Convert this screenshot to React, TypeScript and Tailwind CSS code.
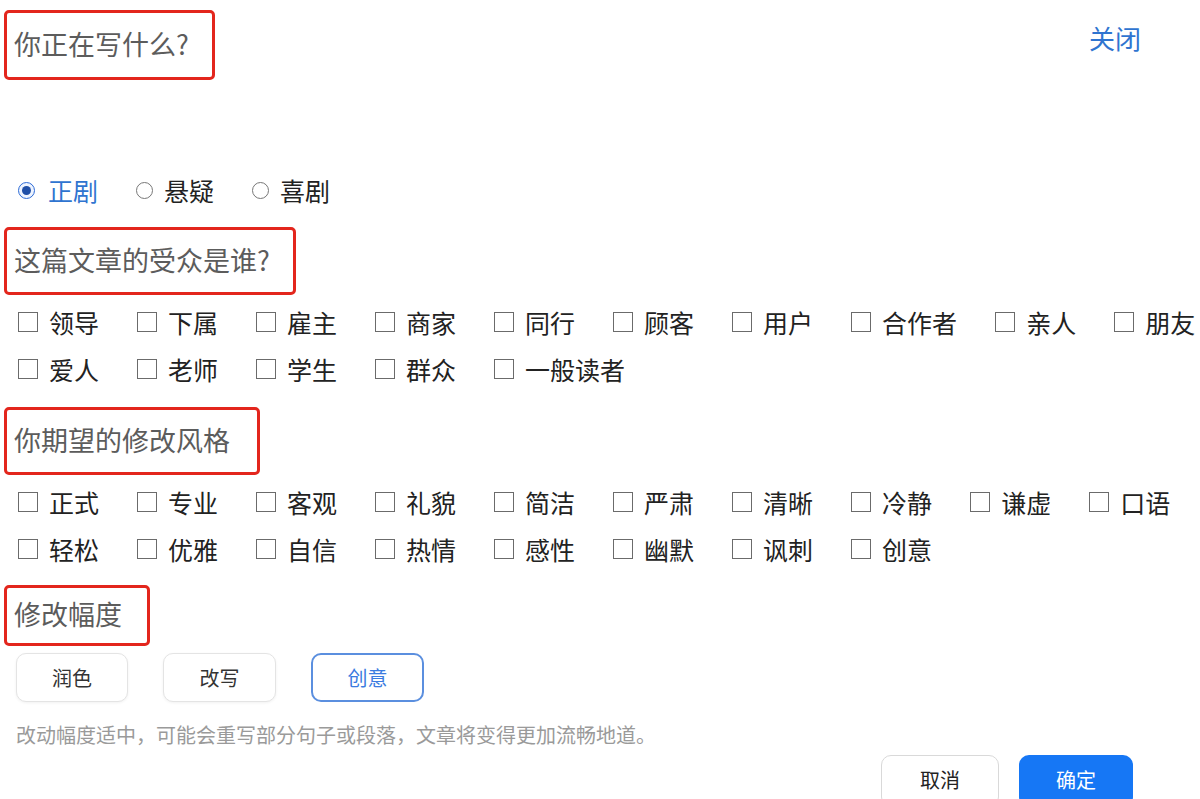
import React from "react";

const audience1 = ["领导", "下属", "雇主", "商家", "同行", "顾客", "用户", "合作者", "亲人", "朋友"];
const audience2 = ["爱人", "老师", "学生", "群众", "一般读者"];
const style1 = ["正式", "专业", "客观", "礼貌", "简洁", "严肃", "清晰", "冷静", "谦虚", "口语"];
const style2 = ["轻松", "优雅", "自信", "热情", "感性", "幽默", "讽刺", "创意"];

function Heading({ text, w, h }: { text: string; w: string; h: string }) {
  return (
    <div className={`ml-[4px] ${w} ${h} border-[3px] border-[#e3261d] rounded-[5px] flex items-center pl-[7px] pb-[4px]`}>
      <span className="text-[27px] text-[#5c5c5c] leading-none">{text}</span>
    </div>
  );
}

function CheckRow({ items }: { items: string[] }) {
  return (
    <div className="flex items-center h-[30px] pl-[18px]">
      {items.map((t) => (
        <div key={t} className="flex items-center mr-[38px] shrink-0">
          <span className="w-[20px] h-[20px] border-[1.5px] border-[#6b6b6b] bg-white box-border" />
          <span className="ml-[11px] text-[25px] leading-none text-[#222]">{t}</span>
        </div>
      ))}
    </div>
  );
}

export default function App() {
  return (
    <div
      className="w-[1200px] h-[799px] bg-white overflow-hidden flex flex-col"
      style={{ fontFamily: '"Noto Sans CJK SC", "Noto Sans", sans-serif' }}
    >
      <div className="flex justify-between items-start pt-[10px]">
        <Heading text="你正在写什么?" w="w-[211px]" h="h-[70px]" />
        <span className="mr-[59px] mt-[15px] text-[26px] leading-none text-[#2f74d0]">关闭</span>
      </div>

      <div className="flex items-center h-[30px] mt-[98px] pl-[18px]">
        <div className="flex items-center mr-[38px]">
          <span className="w-[17px] h-[17px] rounded-full border border-[#2d6bd6] bg-[#eef4ff] flex items-center justify-center">
            <span className="w-[9px] h-[9px] rounded-full bg-[#1f4fa8]" />
          </span>
          <span className="ml-[13px] text-[25px] leading-none text-[#2f74d0]">正剧</span>
        </div>
        <div className="flex items-center mr-[38px]">
          <span className="w-[17px] h-[17px] rounded-full border border-[#777] bg-white" />
          <span className="ml-[11px] text-[25px] leading-none text-[#222]">悬疑</span>
        </div>
        <div className="flex items-center">
          <span className="w-[17px] h-[17px] rounded-full border border-[#777] bg-white" />
          <span className="ml-[11px] text-[25px] leading-none text-[#222]">喜剧</span>
        </div>
      </div>

      <div className="mt-[24px]">
        <Heading text="这篇文章的受众是谁?" w="w-[292px]" h="h-[68px]" />
      </div>
      <div className="mt-[12px] flex flex-col gap-[17px]">
        <CheckRow items={audience1} />
        <CheckRow items={audience2} />
      </div>

      <div className="mt-[23px]">
        <Heading text="你期望的修改风格" w="w-[256px]" h="h-[68px]" />
      </div>
      <div className="mt-[12px] flex flex-col gap-[17px]">
        <CheckRow items={style1} />
        <CheckRow items={style2} />
      </div>

      <div className="mt-[21px]">
        <Heading text="修改幅度" w="w-[146px]" h="h-[61px]" />
      </div>

      <div className="flex mt-[7px] pl-[16px] gap-[35px]">
        <button className="w-[112px] h-[49px] rounded-[10px] border border-[#e4e4e4] shadow-[0_1px_3px_rgba(0,0,0,0.06)] bg-white text-[20px] text-[#333]">润色</button>
        <button className="w-[113px] h-[49px] rounded-[10px] border border-[#e4e4e4] shadow-[0_1px_3px_rgba(0,0,0,0.06)] bg-white text-[20px] text-[#333]">改写</button>
        <button className="w-[113px] h-[49px] rounded-[10px] border-2 border-[#5b8fdf] bg-white text-[20px] text-[#3a7be0]">创意</button>
      </div>

      <div className="mt-[23px] pl-[16px] text-[20px] leading-none text-[#9a9a9a]">
        改动幅度适中，可能会重写部分句子或段落，文章将变得更加流畅地道。
      </div>

      <div className="flex justify-end mt-[10px] pr-[67px] gap-[20px]">
        <button className="w-[118px] h-[52px] rounded-[10px] border border-[#d9d9d9] bg-white text-[20px] text-[#222] pb-[2px]">取消</button>
        <button className="w-[114px] h-[52px] rounded-[10px] bg-[#1677f5] text-[20px] text-white pb-[2px]">确定</button>
      </div>
    </div>
  );
}
